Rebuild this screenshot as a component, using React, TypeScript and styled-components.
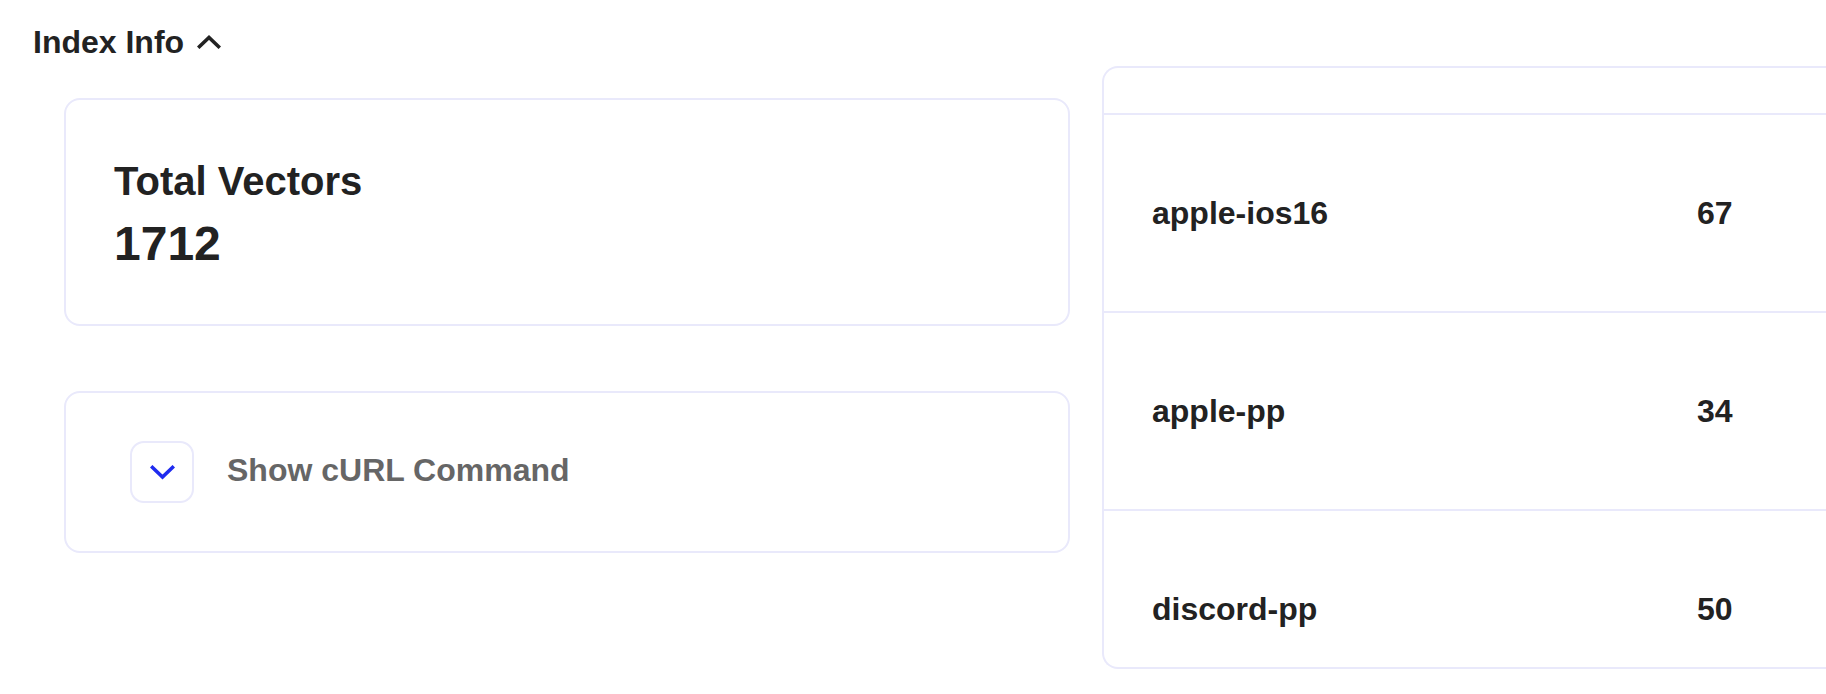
import React from "react";
import styled, { createGlobalStyle } from "styled-components";

const GlobalStyle = createGlobalStyle`
  html, body {
    margin: 0;
    padding: 0;
    background: #ffffff;
    overflow: hidden;
  }
  body {
    font-family: "Liberation Sans", Arial, Helvetica, sans-serif;
    color: #222222;
  }
  * { box-sizing: border-box; }
`;

const Page = styled.div`
  padding: 22px 0 0 32px;
  width: 1826px;
  height: 694px;
  overflow: hidden;
`;

const Header = styled.button`
  display: flex;
  align-items: center;
  gap: 13px;
  height: 40px;
  padding: 0 0 0 1px;
  margin: 0 0 4px 0;
  border: none;
  background: none;
  font-family: inherit;
  font-size: 32px;
  line-height: 40px;
  font-weight: 700;
  color: #222222;
  cursor: pointer;
`;

const Content = styled.div`
  display: grid;
  grid-template-columns: 1038px 1038px;
  column-gap: 32px;
  align-items: start;
`;

const LeftColumn = styled.div`
  display: flex;
  flex-direction: column;
  gap: 65px;
  padding: 32px 0 0 32px;
`;

const Card = styled.div`
  border: 2px solid #e9e9fb;
  border-radius: 16px;
  background: #ffffff;
`;

const StatCard = styled(Card)`
  display: flex;
  flex-direction: column;
  gap: 11px;
  padding: 57px 48px 52px 48px;
`;

const StatLabel = styled.div`
  font-size: 40px;
  line-height: 48px;
  font-weight: 700;
  color: #222222;
`;

const StatValue = styled.div`
  font-size: 48px;
  line-height: 56px;
  font-weight: 700;
  color: #222222;
`;

const CurlCard = styled(Card)`
  display: flex;
  align-items: center;
  gap: 33px;
  padding: 48px 48px 48px 64px;
`;

const ToggleButton = styled.button`
  display: flex;
  align-items: center;
  justify-content: center;
  width: 64px;
  height: 62px;
  padding: 0;
  border: 2px solid #e9e9fb;
  border-radius: 14px;
  background: #ffffff;
  cursor: pointer;
`;

const CurlLabel = styled.span`
  font-size: 32px;
  line-height: 40px;
  font-weight: 700;
  color: #666666;
  margin-top: -5px;
`;

const TableCard = styled(Card)`
  height: 603px;
  overflow: hidden;
  border-right: none;
  border-top-right-radius: 0;
  border-bottom-right-radius: 0;
`;

const HeadRow = styled.div`
  height: 47px;
  border-bottom: 2px solid #e9e9fb;
`;

const Row = styled.div`
  display: grid;
  grid-template-columns: 545px 1fr;
  align-items: center;
  height: 198px;
  border-bottom: 2px solid #e9e9fb;
`;

const Cell = styled.div`
  padding: 0 48px;
  font-size: 32px;
  line-height: 40px;
  font-weight: 700;
  color: #222222;
`;

const ChevronUp = () => (
  <svg width="24" height="14" viewBox="0 0 24 14" fill="none">
    <polyline
      points="2.5,11.5 12,2.5 21.5,11.5"
      stroke="#222222"
      strokeWidth="3.6"
      strokeLinecap="square"
      strokeLinejoin="miter"
    />
  </svg>
);

const ChevronDown = () => (
  <svg width="25" height="15" viewBox="0 0 25 15" fill="none">
    <polyline
      points="2.5,2.5 12.5,12 22.5,2.5"
      stroke="#1f2bef"
      strokeWidth="3.6"
      strokeLinecap="square"
      strokeLinejoin="miter"
    />
  </svg>
);

const rows = [
  { name: "apple-ios16", count: 67 },
  { name: "apple-pp", count: 34 },
  { name: "discord-pp", count: 50 },
];

export default function App() {
  return (
    <>
      <GlobalStyle />
      <Page>
        <Header type="button">
          <span>Index Info</span>
          <ChevronUp />
        </Header>
        <Content>
          <LeftColumn>
            <StatCard>
              <StatLabel>Total Vectors</StatLabel>
              <StatValue>1712</StatValue>
            </StatCard>
            <CurlCard>
              <ToggleButton type="button" aria-label="Show cURL Command">
                <ChevronDown />
              </ToggleButton>
              <CurlLabel>Show cURL Command</CurlLabel>
            </CurlCard>
          </LeftColumn>
          <TableCard>
            <HeadRow />
            {rows.map((r) => (
              <Row key={r.name}>
                <Cell>{r.name}</Cell>
                <Cell>{r.count}</Cell>
              </Row>
            ))}
          </TableCard>
        </Content>
      </Page>
    </>
  );
}
